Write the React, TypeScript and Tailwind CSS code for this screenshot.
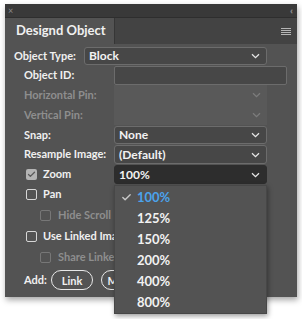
import { Check } from "lucide-react";

const font = { fontFamily: "Lato, 'Open Sans', sans-serif" };

function Chevron({ dim = false }: { dim?: boolean }) {
    return (
        <svg width="9" height="6" viewBox="0 0 9 6" className="shrink-0">
            <path
                d="M1 1.2 L4.5 4.6 L8 1.2"
                fill="none"
                stroke={dim ? "#7c7c7c" : "#e6e6e6"}
                strokeWidth="1.3"
            />
        </svg>
    );
}

function Select({ value, dark = false, className = "" }: { value: string; dark?: boolean; className?: string }) {
    return (
        <div
            className={`flex items-center justify-between rounded-[3px] border pl-[4px] pr-[6px] h-full ${
                dark ? "bg-[#2d2d2d] border-[#2d2d2d]" : "bg-[#474747] border-[#6c6c6c]"
            } ${className}`}
        >
            <span className="text-[12px] font-bold text-[#f2f2f2] leading-none">{value}</span>
            <Chevron />
        </div>
    );
}

function Box({ checked = false, dim = false }: { checked?: boolean; dim?: boolean }) {
    if (checked) {
        return (
            <div className="shrink-0 w-[11px] h-[11px] rounded-[2px] bg-[#b4b4b4] flex items-center justify-center">
                <Check className="w-[9px] h-[9px] text-[#5a5a5a]" strokeWidth={3.5} />
            </div>
        );
    }
    return (
        <div
            className={`shrink-0 w-[11px] h-[11px] rounded-[2px] border ${dim ? "border-[#777777]" : "border-[#d6d6d6]"}`}
        />
    );
}

export default function App() {
    const items = ["100%", "125%", "150%", "200%", "400%", "800%"];

    return (
        <div className="w-[302px] h-[319px] bg-white" style={font}>
            <div className="relative ml-[5px] pt-[4px] w-[292px]">
                <div className="shadow-[1px_3px_6px_rgba(0,0,0,0.35)]">
                    {/* Title bar */}
                    <div className="h-[13px] bg-[#393939] flex items-center justify-between pl-[3px] pr-[6px]">
                        <span className="text-[9px] leading-none text-[#8a8a8a]">×</span>
                        <span className="text-[9px] leading-none text-[#9a9a9a] tracking-[-2px]">‹‹</span>
                    </div>

                    {/* Tabs */}
                    <div className="h-[27px] bg-[#434343] border-t border-[#2e2e2e] flex items-stretch">
                        <div className="w-[109px] bg-[#535353] flex items-center pl-[11px]">
                            <span className="text-[13px] font-bold text-[#f0f0f0]">Designd Object</span>
                        </div>
                        <div className="flex-1 border-l border-[#363636] flex items-center justify-end pr-[6px]">
                            <div className="flex flex-col gap-[1px] w-[10px]">
                                <div className="h-px bg-[#b5b5b5]" />
                                <div className="h-px bg-[#b5b5b5]" />
                                <div className="h-px bg-[#b5b5b5]" />
                                <div className="h-px bg-[#b5b5b5]" />
                            </div>
                        </div>
                    </div>

                    {/* Body */}
                    <div className="bg-[#535353] pt-[3px] pb-[7px] text-[11px] font-bold text-[#f0f0f0]">
                        <div className="h-[18px] flex items-center">
                            <span className="w-[79px] pl-[9px]">Object Type:</span>
                            <Select value="Block" className="w-[183px]" />
                        </div>

                        <div className="mt-px h-[19px] flex items-center">
                            <span className="w-[109px] pl-[19px]">Object ID:</span>
                            <div className="w-[173px] h-full rounded-[2px] bg-[#474747] border border-[#6c6c6c]" />
                        </div>

                        <div className="h-[20px] flex items-center text-[#8e8e8e]">
                            <span className="w-[109px] pl-[19px]">Horizontal Pin:</span>
                            <div className="w-[153px] h-full bg-[#595959] flex items-center justify-end pr-[6px]">
                                <Chevron dim />
                            </div>
                        </div>
                        <div className="h-[20px] flex items-center text-[#8e8e8e]">
                            <span className="w-[109px] pl-[19px]">Vertical Pin:</span>
                            <div className="w-[153px] h-full bg-[#595959] flex items-center justify-end pr-[6px]">
                                <Chevron dim />
                            </div>
                        </div>

                        <div className="mt-px h-[18px] flex items-center">
                            <span className="w-[109px] pl-[19px]">Snap:</span>
                            <Select value="None" className="w-[153px]" />
                        </div>
                        <div className="mt-px h-[19px] flex items-center">
                            <span className="w-[109px] pl-[19px]">Resample Image:</span>
                            <Select value="(Default)" className="w-[153px]" />
                        </div>
                        <div className="mt-px h-[19px] flex items-center">
                            <div className="w-[109px] pl-[21px] flex items-center gap-[6px]">
                                <Box checked />
                                <span>Zoom</span>
                            </div>
                            <Select value="100%" dark className="w-[153px]" />
                        </div>

                        <div className="h-[21px] flex items-center pl-[21px] gap-[6px]">
                            <Box />
                            <span>Pan</span>
                        </div>
                        <div className="h-[21px] w-[109px] overflow-hidden whitespace-nowrap flex items-center pl-[35px] gap-[7px] text-[#8e8e8e]">
                            <Box dim />
                            <span>Hide Scroll</span>
                        </div>
                        <div className="h-[21px] w-[109px] overflow-hidden whitespace-nowrap flex items-center pl-[21px] gap-[6px]">
                            <Box />
                            <span>Use Linked Ima</span>
                        </div>
                        <div className="h-[21px] w-[109px] overflow-hidden whitespace-nowrap flex items-center pl-[35px] gap-[7px] text-[#8e8e8e]">
                            <Box dim />
                            <span>Share Linke</span>
                        </div>

                        <div className="mt-[2px] h-[20px] w-[109px] overflow-hidden flex items-center pl-[19px] gap-[4px]">
                            <span>Add:</span>
                            <button className="shrink-0 h-full px-[10px] rounded-full border border-[#e8e8e8] leading-none">Link</button>
                            <button className="shrink-0 ml-[4px] h-full pl-[5px] pr-[10px] rounded-full border border-[#e8e8e8] leading-none">M</button>
                        </div>
                    </div>
                </div>

                {/* Zoom dropdown menu */}
                <div className="absolute left-[109px] top-[185px] w-[153px] bg-[#535353] border border-[#474747] shadow-[1px_2px_5px_rgba(0,0,0,0.4)] pt-px">
                    {items.map((item, i) => (
                        <div key={item} className="h-[21px] flex items-center">
                            <span className="w-[22px] flex justify-center">
                                {i === 0 && <Check className="w-[11px] h-[11px] text-[#c9c9c9]" strokeWidth={3} />}
                            </span>
                            <span
                                className={`text-[13px] font-bold leading-none ${i === 0 ? "text-[#4ba3ec]" : "text-[#f2f2f2]"}`}
                            >
                                {item}
                            </span>
                        </div>
                    ))}
                </div>
            </div>
        </div>
    );
}
